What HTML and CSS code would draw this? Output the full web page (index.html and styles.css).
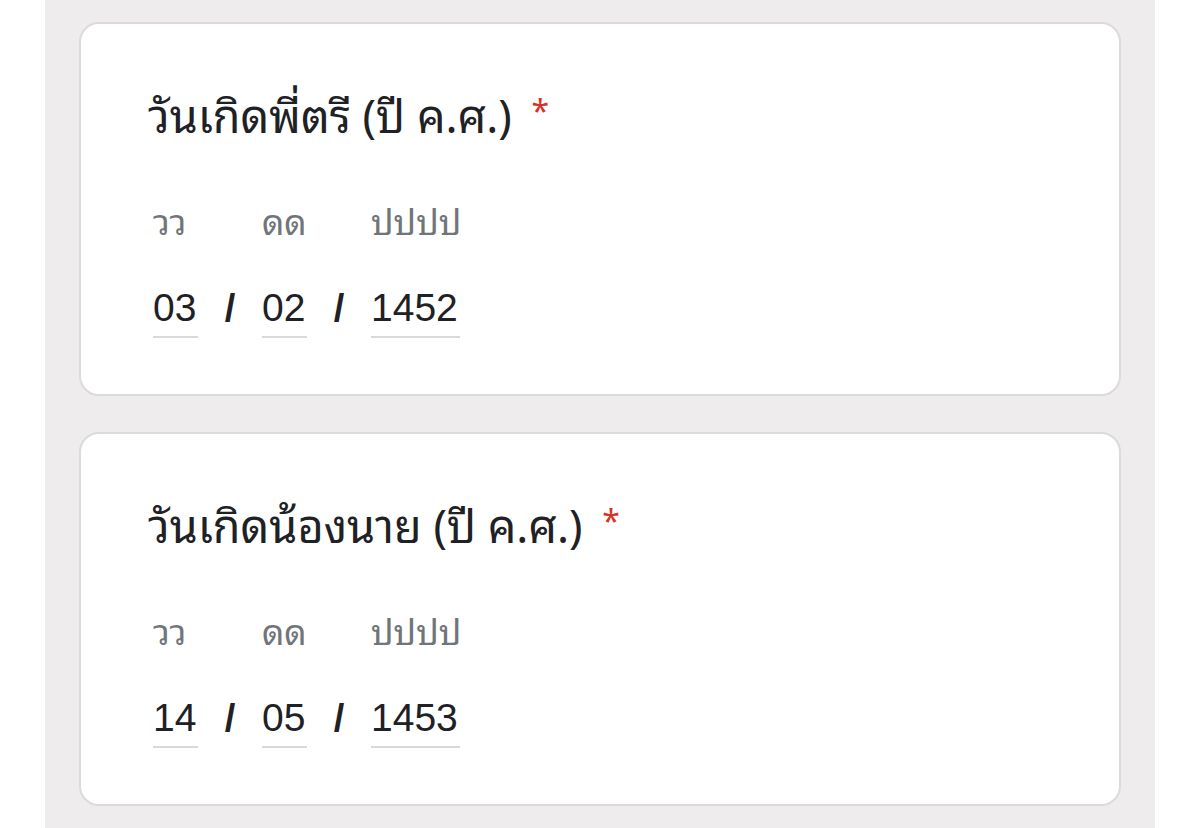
FILE: index.html
```html
<!DOCTYPE html>
<html lang="th">
  <head>
    <meta charset="UTF-8" />
    <meta name="viewport" content="width=device-width, initial-scale=1.0" />
    <title>วันเกิด</title>
    <link rel="stylesheet" href="styles.css">
  </head>
  <body>
    <div class="form">
      <div class="card">
        <div class="question">วันเกิดพี่ตรี (ปี ค.ศ.) <span class="required">*</span></div>
        <div class="date">
          <div class="field field-short">
            <div class="label">วว</div>
            <div class="value">03</div>
          </div>
          <div class="sep">/</div>
          <div class="field field-short">
            <div class="label">ดด</div>
            <div class="value">02</div>
          </div>
          <div class="sep">/</div>
          <div class="field field-long">
            <div class="label">ปปปป</div>
            <div class="value">1452</div>
          </div>
        </div>
      </div>

      <div class="card">
        <div class="question">วันเกิดน้องนาย (ปี ค.ศ.) <span class="required">*</span></div>
        <div class="date">
          <div class="field field-short">
            <div class="label">วว</div>
            <div class="value">14</div>
          </div>
          <div class="sep">/</div>
          <div class="field field-short">
            <div class="label">ดด</div>
            <div class="value">05</div>
          </div>
          <div class="sep">/</div>
          <div class="field field-long">
            <div class="label">ปปปป</div>
            <div class="value">1453</div>
          </div>
        </div>
      </div>
    </div>
  </body>
</html>
```

FILE: styles.css
```css
* {
  margin: 0;
  padding: 0;
  box-sizing: border-box;
}

body {
  background: #fff;
  font-family: "Noto Sans Thai Looped", "Noto Looped Thai", "Garuda", "Loma", "Tlwg Typo", "Noto Sans Thai", "Noto Sans", sans-serif;
  height: 828px;
  overflow: hidden;
}

.form {
  width: 1110px;
  margin: 0 auto;
  height: 100%;
  background-color: #eeeced;
  padding: 22px 34px 0;
  display: flex;
  flex-direction: column;
  gap: 36px;
}

.card {
  background-color: #fff;
  border: 2px solid #dcdadb;
  border-radius: 20px;
  height: 374px;
  padding: 59px 67px 0;
}

.question {
  font-size: 45px;
  font-weight: 400;
  line-height: 60px;
  color: #202124;
}

.required {
  color: #d93025;
  font-size: 32px;
  line-height: 0;
  vertical-align: 10px;
  margin-left: 8px;
}

.date {
  display: flex;
  align-items: flex-end;
  margin-top: 56px;
  margin-left: 5px;
}

.field-short {
  width: 45px;
}

.field-long {
  width: 89px;
}

.label {
  font-size: 35px;
  line-height: 40px;
  color: #70757a;
  white-space: nowrap;
}

.value {
  margin-top: 47px;
  font-family: "Liberation Sans", Arial, sans-serif;
  font-size: 39px;
  line-height: 44px;
  color: #202124;
  padding-bottom: 6px;
  border-bottom: 2px solid #d9d9d9;
}

.sep {
  width: 64px;
  text-align: center;
  font-family: "Liberation Sans", Arial, sans-serif;
  font-size: 38px;
  font-weight: 700;
  line-height: 44px;
  color: #202124;
  padding-bottom: 8px;
}
```
